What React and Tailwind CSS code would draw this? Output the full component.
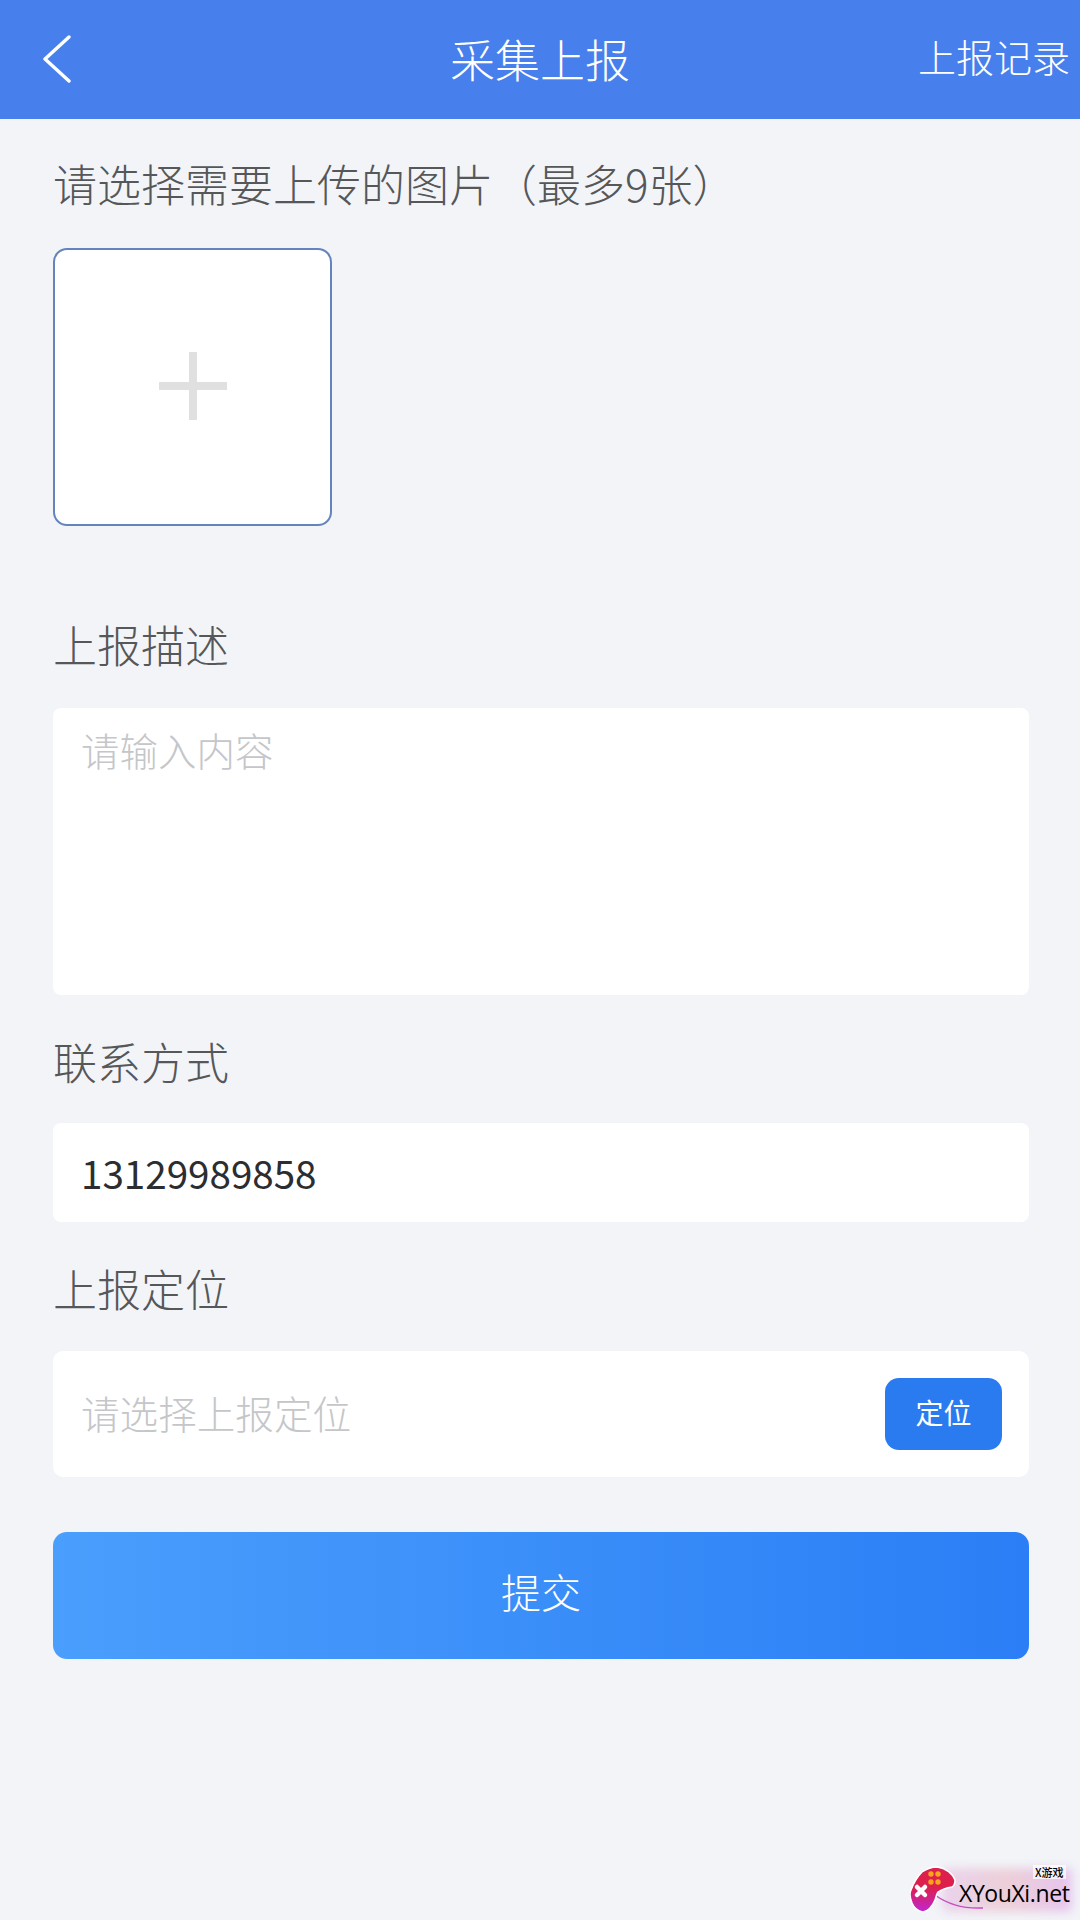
const cjk = "font-['Noto_Sans_CJK_SC','Noto_Sans',sans-serif]";

function Label({ children, className = "" }) {
  return (
    <div className={`text-[44px] leading-[60px] font-light text-[#555759] ${className}`}>
      {children}
    </div>
  );
}

function Watermark() {
  return (
    <div className="absolute right-0 bottom-0 w-[170px] h-[55px]">
      <div className="absolute left-[32px] top-[3px] w-[130px] h-[44px] rounded-md bg-gradient-to-r from-[#ead3ec] via-[#eccfd8] to-[#e6c4ee] blur-[5px]" />
      <svg className="absolute left-0 top-0" width="110" height="50" viewBox="0 0 110 50">
        <defs>
          <linearGradient id="pad" x1="0" y1="0" x2="0" y2="1">
            <stop offset="0.45" stopColor="#dc1f4d" />
            <stop offset="1" stopColor="#c026d3" />
          </linearGradient>
        </defs>
        <path d="M25 30 C36 38 52 44 73 43" fill="none" stroke="#c64fc0" strokeWidth="1.5" />
        <path d="M12 7 C18 3 24 2 27 2 C36 3 43 9 45 15 C45 19 44 21 42 22 C36 23 31 25 28 27 C26 30 26 33 25 35 C22 42 18 46 13 47 C8 46 4 43 2 38 C0 33 -1 29 1 25 C4 17 8 11 12 7 Z" fill="url(#pad)" stroke="#fff" strokeWidth="1.5" />
        <circle cx="21" cy="9" r="2.7" fill="#f9a51a" />
        <circle cx="28" cy="9" r="2.7" fill="#f9a51a" />
        <circle cx="21" cy="17" r="2.7" fill="#f9a51a" />
        <circle cx="28" cy="17" r="2.7" fill="#f9a51a" />
        <path d="M7 22 L15 30 M15 22 L7 30" stroke="#fff" strokeWidth="4.5" strokeLinecap="round" />
      </svg>
      <div className="absolute left-[123px] top-0 text-[11px] leading-[14px] font-medium text-black bg-white/70 px-[2px]">
        X游戏
      </div>
      <div className="absolute left-[49px] top-[13px] text-[23px] leading-[30px] font-medium text-black font-['Open_Sans',sans-serif] tracking-[-0.4px]">
        XYouXi.net
      </div>
    </div>
  );
}

export default function App() {
  return (
    <div className={`relative w-[1080px] h-[1920px] overflow-hidden bg-[#f2f4f8] ${cjk}`}>
      <div className="relative flex items-center justify-center h-[119px] pb-[2px] bg-[#4780ed] text-white">
        <svg className="absolute left-[42px] top-[35px]" width="29" height="48" viewBox="0 0 29 48" fill="none">
          <path d="M27 2 L3 24 L27 46" stroke="#fff" strokeWidth="3.4" strokeLinecap="round" strokeLinejoin="round" />
        </svg>
        <div className="text-[45px] font-light">采集上报</div>
        <div className="absolute right-[10px] top-[30px] text-[38px] leading-[52px] font-light">
          上报记录
        </div>
      </div>

      <div className="flex flex-col w-[976px] ml-[53px]">
        <Label className="mt-[34px]">请选择需要上传的图片（最多9张）</Label>

        <div className="flex items-center justify-center w-[279px] h-[278px] mt-[35px] bg-white border-[2.5px] border-[#6484bc] rounded-[14px]">
          <div className="relative w-[68px] h-[68px] -mt-[2px]">
            <div className="absolute left-[30px] top-0 w-[8px] h-[68px] bg-[#e0e0e0]" />
            <div className="absolute left-0 top-[30px] w-[68px] h-[8px] bg-[#e0e0e0]" />
          </div>
        </div>

        <Label className="mt-[88px]">上报描述</Label>

        <div className="h-[287px] mt-[34px] px-[28px] py-[16px] bg-white rounded-[8px] text-[38.5px] leading-[50px] font-light text-[#c4c6c9]">
          请输入内容
        </div>

        <Label className="mt-[36px]">联系方式</Label>

        <div className="flex items-center h-[99px] mt-[32px] px-[28px] bg-white rounded-[8px] text-[38.6px] text-[#2b2d30]">
          13129989858
        </div>

        <Label className="mt-[36px]">上报定位</Label>

        <div className="flex items-center justify-between h-[126px] mt-[33px] pl-[28px] pr-[27px] bg-white rounded-[10px]">
          <span className="text-[38.6px] font-light text-[#c4c6c9] mb-[2px]">请选择上报定位</span>
          <button className="w-[117px] h-[72px] pb-[4px] rounded-[14px] bg-[#2a7bf0] text-[28px] text-white">
            定位
          </button>
        </div>

        <button className="h-[127px] mt-[55px] pb-[10px] rounded-[14px] bg-gradient-to-r from-[#4a9efc] to-[#2b7ef5] text-[40px] font-light text-white">
          提交
        </button>
      </div>

      <Watermark />
    </div>
  );
}
